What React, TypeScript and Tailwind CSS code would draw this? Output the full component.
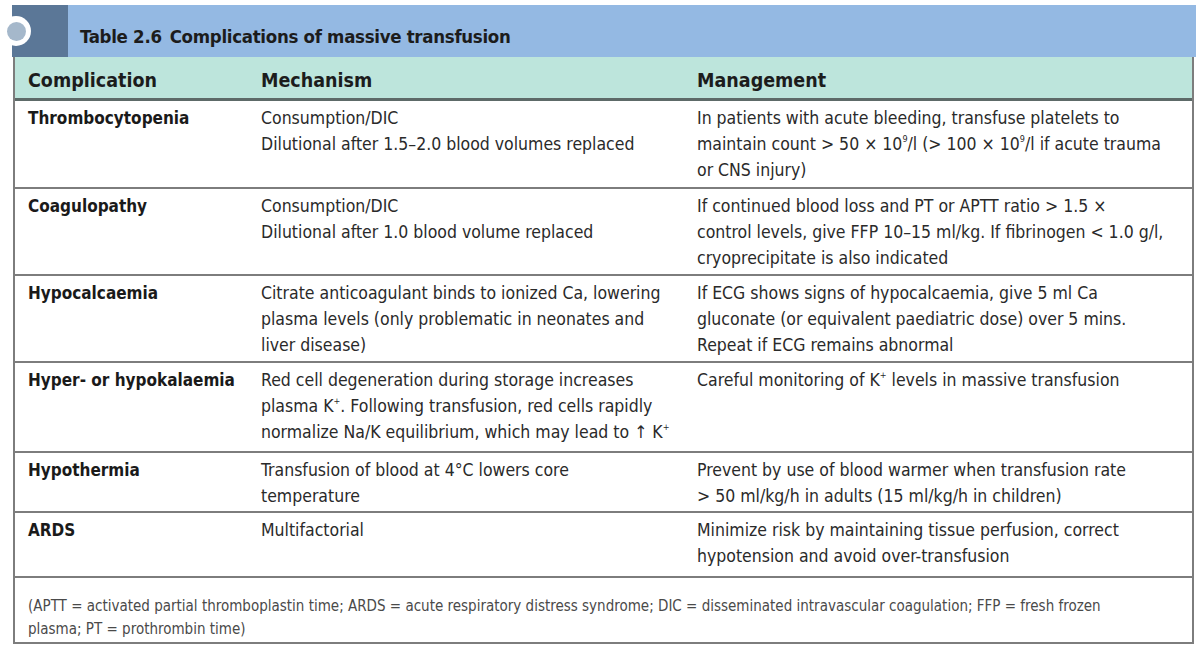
const font = { fontFamily: '"Liberation Sans Narrow", "DejaVu Sans Condensed", "Liberation Sans", sans-serif' };

type Row = { name: string; mech: React.ReactNode; mgmt: React.ReactNode; h: string };

// small raised glyph (10^9, K+)
const sup = (s: string) => <span className="inline-block text-[9px] leading-[9px] align-top relative top-[4px]">{s}</span>;

const rows: Row[] = [
  {
    name: "Thrombocytopenia",
    mech: <>Consumption/DIC<br />Dilutional after 1.5–2.0 blood volumes replaced</>,
    mgmt: <>In patients with acute bleeding, transfuse platelets to<br />maintain count &gt; 50 × 10{sup("9")}/l (&gt; 100 × 10{sup("9")}/l if acute trauma<br />or CNS injury)</>,
    h: "h-[88px]",
  },
  {
    name: "Coagulopathy",
    mech: <>Consumption/DIC<br />Dilutional after 1.0 blood volume replaced</>,
    mgmt: <>If continued blood loss and PT or APTT ratio &gt; 1.5 ×<br />control levels, give FFP 10–15 ml/kg. If fibrinogen &lt; 1.0 g/l,<br />cryoprecipitate is also indicated</>,
    h: "h-[87px]",
  },
  {
    name: "Hypocalcaemia",
    mech: <>Citrate anticoagulant binds to ionized Ca, lowering<br />plasma levels (only problematic in neonates and<br />liver disease)</>,
    mgmt: <>If ECG shows signs of hypocalcaemia, give 5 ml Ca<br />gluconate (or equivalent paediatric dose) over 5 mins.<br />Repeat if ECG remains abnormal</>,
    h: "h-[87px]",
  },
  {
    name: "Hyper- or hypokalaemia",
    mech: <>Red cell degeneration during storage increases<br />plasma K{sup("+")}. Following transfusion, red cells rapidly<br />normalize Na/K equilibrium, which may lead to ↑ K{sup("+")}</>,
    mgmt: <>Careful monitoring of K{sup("+")} levels in massive transfusion</>,
    h: "h-[90px]",
  },
  {
    name: "Hypothermia",
    mech: <>Transfusion of blood at 4°C lowers core<br />temperature</>,
    mgmt: <>Prevent by use of blood warmer when transfusion rate<br />&gt; 50 ml/kg/h in adults (15 ml/kg/h in children)</>,
    h: "h-[60px]",
  },
  {
    name: "ARDS",
    mech: <>Multifactorial</>,
    mgmt: <>Minimize risk by maintaining tissue perfusion, correct<br />hypotension and avoid over-transfusion</>,
    h: "h-[65px]",
  },
];

export default function App() {
  return (
    <div className="w-[1202px] h-[652px] bg-white relative" style={font}>
      <div className="pt-[5px] pl-[12px] pr-[6px]">
        <div className="relative flex h-[52px]">
          <div className="w-[56px] bg-[#5b7797]" />
          <div className="flex-1 bg-[#94b9e3] flex items-center pl-[12px] pt-[11px] text-[18.5px] font-bold text-[#1c1c1c] tracking-[-0.3px]">
            <span>Table 2.6</span>
            <span className="ml-[8px]">Complications of massive transfusion</span>
          </div>
          <div className="absolute -left-[11px] top-[11px] w-[30px] h-[30px] rounded-full bg-white flex items-center justify-center">
            <div className="w-[19px] h-[19px] rounded-full bg-[#a5b8cb]" />
          </div>
        </div>

        <div className="ml-[1px] mr-[2px] border-x-2 border-b-2 border-[#7d7d7d]">
          <div className="grid grid-cols-[233px_436px_1fr] h-[44px] bg-[#bde5dc] border-b-[3px] border-[#5d6a68] items-center text-[19.5px] font-bold text-[#1c1c1c] pt-[6px]">
            <div className="pl-[13px]">Complication</div>
            <div className="pl-[13px]">Mechanism</div>
            <div className="pl-[13px]">Management</div>
          </div>
          {rows.map((r) => (
            <div key={r.name} className={`grid grid-cols-[233px_436px_1fr] ${r.h} border-b-2 border-[#7d7d7d] text-[17.5px] leading-[26px] pt-[4px] text-[#2a2a2a] whitespace-nowrap`}>
              <div className="pl-[13px] font-bold text-[17px] text-[#1a1a1a]">{r.name}</div>
              <div className="pl-[13px]">{r.mech}</div>
              <div className="pl-[13px]">{r.mgmt}</div>
            </div>
          ))}
          <div className="h-[64px] pl-[13px] pt-[17px] pr-[40px] text-[15px] leading-[23px] text-[#4a4a4a]">
            (APTT = activated partial thromboplastin time; ARDS = acute respiratory distress syndrome; DIC = disseminated intravascular coagulation; FFP = fresh frozen plasma; PT = prothrombin time)
          </div>
        </div>
      </div>
    </div>
  );
}
